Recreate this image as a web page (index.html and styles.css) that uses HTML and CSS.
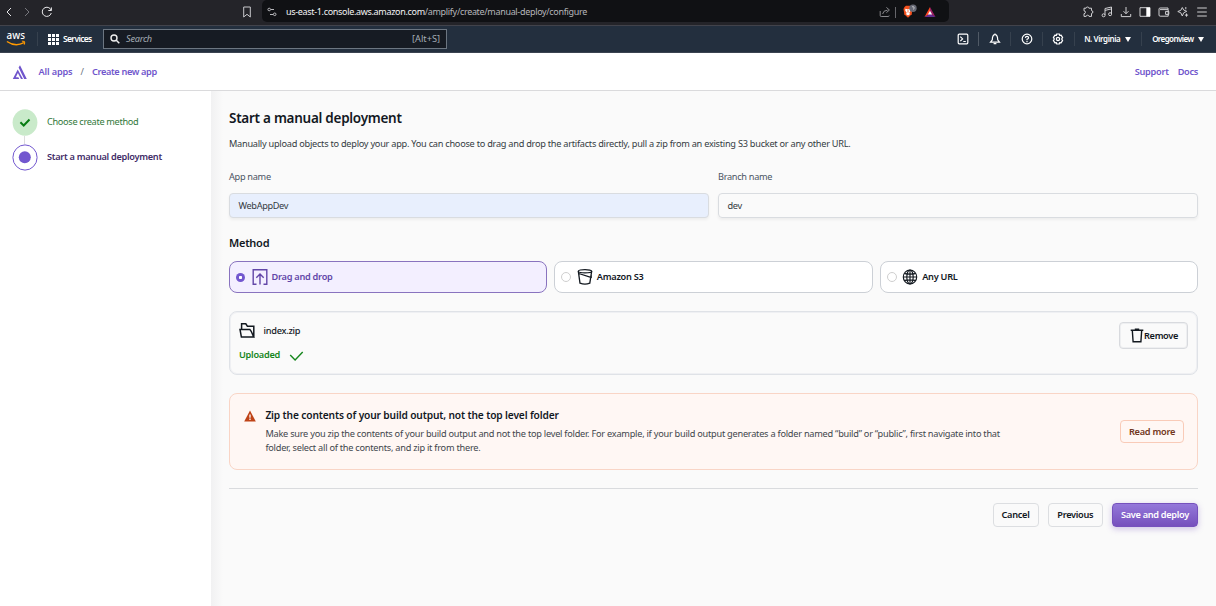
FILE: index.html
```html
<!DOCTYPE html>
<html lang="en">
<head>
<meta charset="utf-8">
<title>AWS Amplify</title>
<link rel="stylesheet" href="styles.css">
</head>
<body>
<header class="browser">
  <div class="nav-icons">
    <svg width="10" height="12" viewBox="0 0 10 12"><path d="M7 2 3 6l4 4" stroke="#e8e8ea"/></svg>
    <svg width="10" height="12" viewBox="0 0 10 12"><path d="m3 2 4 4-4 4" stroke="#77777d"/></svg>
    <svg width="12" height="12" viewBox="0 0 12 12"><path d="M10.2 4.3A4.6 4.6 0 1 0 10.3 7M10.4 1.4v3.1H7.3" stroke="#e8e8ea"/></svg>
  </div>
  <svg class="bookmark" width="10" height="12" viewBox="0 0 10 12"><path d="M1.7 1h6.6v10L5 8.3 1.7 11z" stroke="#c8c8cc"/></svg>
  <div class="address">
    <svg width="10" height="10" viewBox="0 0 10 10"><path d="M4 2.5h3M3 7.5h3" stroke="#b8b8bc"/><circle cx="2.2" cy="2.5" r="1.3" stroke="#b8b8bc"/><circle cx="7.7" cy="7.3" r="1.3" stroke="#b8b8bc"/></svg>
    <span class="url">us-east-1.console.aws.amazon.com<span class="path">/amplify/create/manual-deploy/configure</span></span>
    <svg class="share" width="12" height="12" viewBox="0 0 12 12"><path d="M1.2 5v4.5q0 1 1 1h7q1 0 1-1M3.6 8q.5-3.6 5-3.9M7.4 1.4 10.4 4 7.4 6.7" stroke="#88888c"/></svg>
    <i class="bar"></i>
    <svg width="16" height="16" viewBox="0 0 16 16"><path d="m3.5 3 1.4-1.2h4.2L10.5 3l1 2-.8 5.2L7 13.8l-3.7-3.6L2.5 5z" fill="#f4511e"/><path d="m4.3 4.7 2.2.5 2.6-.5.5 2L8.2 9l1 1L7 11.6 4.8 10l1-1-1.5-2.3z" fill="#fff"/><path d="M7 5.6v3" stroke="#f4511e" stroke-width=".8"/><circle cx="12" cy="4.2" r="3.7" fill="#666975"/><path d="M11 3q1-1 2 .2t-1 2.2" stroke="#ddd" stroke-width=".8"/></svg>
    <svg class="bat" width="12" height="12" viewBox="0 0 12 12"><path d="M6 1 .5 11 6 8z" fill="#ff4724"/><path d="m6 1 5.5 10L6 8z" fill="#9e1f63"/><path d="M.5 11h11L6 7.6z" fill="#662d91"/><path d="M6 4.8 3.9 8.5h4.2z" fill="#fff"/></svg>
  </div>
  <div class="tools">
    <svg width="12" height="12" viewBox="0 0 12 12"><path d="M2 2.2h2.1a1.4 1.2 0 0 1 2.8 0h2.6v2.4a1.4 1.4 0 0 1 0 2.8v3H7a1.4 1.2 0 0 0-2.8 0H2V7.7a1.4 1.4 0 0 0 0-2.9z"/></svg>
    <svg width="12" height="12" viewBox="0 0 12 12"><path d="M4 9V2.5L10.5 1v7M4 4.4l6.5-1.5"/><circle cx="2.6" cy="9.3" r="1.5"/><circle cx="9.1" cy="8.2" r="1.5"/></svg>
    <svg width="12" height="12" viewBox="0 0 12 12"><path d="M6 1v6.7M3.5 5.2 6 7.7l2.5-2.5M1.3 8v2.6h9.4V8"/></svg>
    <svg width="12" height="12" viewBox="0 0 12 12"><path d="M1 1.7h10v8.6H1z"/><path d="M7.3 1.5H11v9H7.3z" fill="#fff" stroke="none"/></svg>
    <svg width="12" height="12" viewBox="0 0 12 12"><path d="M10 3.5V2H2.2q-1.2 0-1.2 1v6q0 1.2 1.2 1.2h8V3.6H2M10.8 5.4H7.6v3h3.2z"/></svg>
    <svg width="12" height="12" viewBox="0 0 12 12"><path d="M5.3 1.5 6.7 4l3 1.3-3 1.5L5.3 10 3.8 6.8.8 5.5l3-1.2zM9.5 7.5v3.2M7.9 9.1h3.2M8.8 1v2.3"/></svg>
    <svg width="12" height="12" viewBox="0 0 12 12"><path d="M1.2 2h9.6M1.2 6h9.6M1.2 10h9.6"/></svg>
  </div>
</header>

<nav class="aws">
  <svg class="logo" width="21" height="18" viewBox="0 0 21 18"><text x="0.6" y="8.8" textLength="18.4" lengthAdjust="spacingAndGlyphs">aws</text><path d="M.9 11.5q8.5 5.8 17 1.2" stroke="#ff9900" stroke-width="1.5"/><path d="M15.9 11.3q4-.7 2.3 3.3" stroke="#ff9900" stroke-width="1.1"/></svg>
  <i class="rule"></i>
  <svg class="grid" width="11" height="11" viewBox="0 0 11 11"><path d="M0 0h3v3H0zM4 0h3v3H4zM8 0h3v3H8zM0 4h3v3H0zM4 4h3v3H4zM8 4h3v3H8zM0 8h3v3H0zM4 8h3v3H4zM8 8h3v3H8z" fill="#fff"/></svg>
  <span class="services">Services</span>
  <div class="search">
    <svg width="10" height="10" viewBox="0 0 10 10"><circle cx="4" cy="4" r="3" stroke="#eee" stroke-width="1.4"/><path d="m6.3 6.3 3 3" stroke="#eee" stroke-width="1.5"/></svg>
    <em>Search</em><span class="key">[Alt+S]</span>
  </div>
  <div class="account">
    <svg width="12" height="12" viewBox="0 0 12 12"><rect x="1.2" y="1.2" width="9.6" height="9.6" rx="1"/><path d="m3.3 3.6 2.3 2.3-2.3 2.2M6.3 8.5h2.5"/></svg>
    <i class="rule lit"></i>
    <svg width="12" height="12" viewBox="0 0 12 12"><path d="M3.3 6.8 1.5 9.1h9L8.7 6.8Q8.6 1.7 6 1.7T3.3 6.8zM4.6 10.6h2.8M6 .5v1"/></svg>
    <i class="rule"></i>
    <svg width="12" height="12" viewBox="0 0 12 12"><circle cx="6" cy="6" r="4.8"/><path d="M4.4 4.9Q4.5 3.4 6 3.4t1.6 1.4Q7.6 5.7 6 6.2v1M6 8v1.2"/></svg>
    <i class="rule"></i>
    <svg width="12" height="12" viewBox="0 0 12 12"><path d="m4.7 1-.4 1.4-1.4-.2L1.4 4.6l.9 1.4-.9 1.4 1.5 2.4 1.4-.2.4 1.4h2.6l.4-1.4 1.4.2 1.5-2.4L9.7 6l.9-1.4-1.5-2.4-1.4.2L7.3 1z"/><circle cx="6" cy="6" r="1.6"/></svg>
    <i class="rule"></i>
    <span class="region">N. Virginia</span><i class="caret"></i>
    <i class="rule second"></i>
    <span class="user">Oregonview</span><i class="caret"></i>
  </div>
</nav>

<div class="crumbs">
  <svg width="15" height="15" viewBox="0 0 15 15"><path d="M5.7 4.4.8 14h6.4l-.8-1.7H3.8l2.1-4.4L9 14h2zM6.6 2.6 8 .2 14.8 14h-2.6z" fill="#7056cc"/></svg>
  <a class="all">All apps</a><span class="slash">/</span><a class="new">Create new app</a>
  <a class="support">Support</a><a class="docs">Docs</a>
</div>

<div class="layout">
  <aside>
    <div class="step done">
      <svg width="26" height="27" viewBox="0 0 26 27"><ellipse cx="13" cy="13.5" rx="12.4" ry="13.2" fill="#c9eaca"/><path d="m8.4 13.3 3.3 3.2 5.8-6" stroke="#087d13" stroke-width="2"/></svg>
      <span>Choose create method</span>
    </div>
    <i class="link"></i>
    <div class="step now">
      <svg width="26" height="27" viewBox="0 0 26 27"><ellipse cx="13" cy="13.5" rx="12.1" ry="12.6" fill="#fff" stroke="#7257cf"/><circle cx="12.8" cy="13.3" r="6" fill="#7257cf"/></svg>
      <span>Start a manual deployment</span>
    </div>
  </aside>
  <main>
    <h1>Start a manual deployment</h1>
    <p class="intro">Manually upload objects to deploy your app. You can choose to drag and drop the artifacts directly, pull a zip from an existing S3 bucket or any other URL.</p>
    <div class="fields">
      <label><span class="fname">App name</span><span class="input filled">WebAppDev</span></label>
      <label><span class="fname">Branch name</span><span class="input">dev</span></label>
    </div>
    <h2>Method</h2>
    <div class="methods">
      <div class="method active">
        <i class="radio"></i>
        <svg width="16" height="18" viewBox="0 0 16 18"><path d="M4.5 16.2H1.2V1.7h13.6v14.5h-3.3M8 16.5V6M4.3 9.7 8 6.1l3.7 3.6" stroke="#6246a8" stroke-width="1.4"/></svg>
        <span>Drag and drop</span>
      </div>
      <div class="method">
        <i class="radio"></i>
        <svg width="16" height="18" viewBox="0 0 16 18"><ellipse cx="8" cy="3.2" rx="6.7" ry="1.6"/><path d="M1.3 3.2 3 15.2q5 1.9 9.8 0L14.7 3.2M1.8 5.5 13.9 9.3M14.2 7v3"/></svg>
        <span>Amazon S3</span>
      </div>
      <div class="method">
        <i class="radio"></i>
        <svg class="globe" width="16" height="18" viewBox="0 0 16 18"><ellipse cx="8" cy="9" rx="6.7" ry="7"/><ellipse cx="8" cy="9" rx="3.2" ry="7"/><path d="M8 2v14M1.3 9h13.4M2.8 5.6q5.2 1 10.4 0M2.8 12.4q5.2-1 10.4 0"/></svg>
        <span>Any URL</span>
      </div>
    </div>
    <section class="file">
      <div>
        <div class="filename"><svg width="17" height="17" viewBox="0 0 17 17"><path d="M2.6 7.5V1.8h4.2l1.6 2.4h6.4v11M1 7.4h9.8l1.4 1.9 2.6 5.8H2.4z" stroke="#12181f" stroke-width="1.5"/></svg><span>index.zip</span></div>
        <div class="status"><span>Uploaded</span><svg width="15" height="12" viewBox="0 0 15 12"><path d="m1.2 6 4.9 5L13.7 3" stroke="#15861c" stroke-width="1.4"/></svg></div>
      </div>
      <button class="remove"><svg width="14" height="15" viewBox="0 0 14 15"><path d="M.7 2.3h12.6M4.8 1.3h4.4M2.3 2.3l.8 11.5h7.8l.8-11.5" stroke="#12181f" stroke-width="1.4"/></svg><span>Remove</span></button>
    </section>
    <section class="warning">
      <svg width="12" height="12" viewBox="0 0 12 12"><path d="M6 .5.2 11.5h11.6z" fill="#bf4317"/><path d="M6 4.5v3.2M6 8.6V10" stroke="#fff" stroke-width="1.3"/></svg>
      <div class="message">
        <h3>Zip the contents of your build output, not the top level folder</h3>
        <p>Make sure you zip the contents of your build output and not the top level folder. For example, if your build output generates a folder named “build” or “public”, first navigate into that<br>folder, select all of the contents, and zip it from there.</p>
      </div>
      <button class="more">Read more</button>
    </section>
    <footer>
      <button class="cancel">Cancel</button>
      <button class="prev">Previous</button>
      <button class="save">Save and deploy</button>
    </footer>
  </main>
</div>
</body>
</html>
```
FILE: styles.css
```css
* { box-sizing: border-box; }
body {
  margin: 0; width: 1216px; height: 606px; overflow: hidden;
  display: flex; flex-direction: column;
  background: #fafafa; color: #12181f;
  font: 9.2px/14px "Noto Sans", "Open Sans", sans-serif;
  letter-spacing: -.255px;
  white-space: nowrap;
}
svg { fill: none; flex: none; display: block; }
i { display: block; flex: none; }
button { font: inherit; font-weight: 600; letter-spacing: inherit; color: inherit; padding: 0; }
h1, h2, h3, p { margin: 0; }

.browser { height: 26px; flex: none; display: flex; align-items: flex-start; background: #242429; border-bottom: 1px solid #42434b; }
.nav-icons { display: flex; gap: 8px; padding: 6px 0 0 4px; width: 242px; }
.nav-icons svg:last-child { margin-left: 1px; }
.bookmark { margin-top: 6px; }
.address { display: flex; align-items: center; margin-left: 10px; width: 687px; height: 22px; padding-left: 5px; background: #101114; border-radius: 5px; }
.url { margin-left: 9px; width: 593px; color: #f4f4f4; font-size: 9px; letter-spacing: -.32px; padding-top: 2px; }
.path { color: #b6b6ba; }
.bar { width: 1px; height: 11px; background: #66666b; margin: 2px 5px 0 4px; }
.address svg { margin-top: 1px; }
.address .bat { margin-left: 7px; }
.tools { display: flex; gap: 7px; padding: 6px 0 0 133px; }
.tools svg { stroke: #cfcfd2; stroke-width: 1; }

.aws { height: 27px; flex: none; display: flex; align-items: center; background: #232f3e; border-bottom: 1px solid #3a4350; color: #fff; font-weight: 600; }
.logo { margin: 0 0 0 6px; overflow: visible; }
.logo text { font: 500 11px "Noto Sans", sans-serif; letter-spacing: 0; fill: #fff; }
.rule { width: 1px; height: 14px; background: #36414e; }
.lit { background: #505a66; }
.logo + .rule { margin-left: 10px; }
.grid { margin-left: 10px; }
.services { margin-left: 4px; width: 40px; font-size: 8.5px; letter-spacing: -.65px; }
.search { display: flex; align-items: center; width: 344px; height: 20px; border: 1px solid #6c7681; background: #161b23; padding: 0 6px; color: #a4acb5; font-weight: 400; }
.search em { margin-left: 6px; flex: 1; }
.key { font-size: 9.2px; letter-spacing: 0; }
.account { display: flex; align-items: center; margin-left: 510px; flex: 1; }
.account svg { stroke: #fff; stroke-width: 1.2; }
.account .rule { margin: 0 9.4px; }
.account .second { margin: 0 10px; }
.region { font-size: 8px; width: 38px; letter-spacing: -.4px; }
.user { font-size: 8px; width: 43px; letter-spacing: -.58px; }
.caret { border: solid transparent; border-width: 5px 3px 0; border-top-color: #fff; margin-left: 3px; }

.crumbs { height: 38px; flex: none; display: flex; align-items: center; background: #fff; border-bottom: 1px solid #dadadc; padding: 1px 18px 0 12px; color: #7056cc; font-weight: 600; }
.all { margin-left: 11.5px; width: 34px; letter-spacing: -.15px; }
.slash { color: #68717c; margin: 0 8.5px 0 8px; width: 3px; font-weight: 400; }
.new { flex: 1; letter-spacing: -.36px; }
.docs { margin-left: 9px; letter-spacing: -.3px; }

.layout { flex: 1; display: flex; min-height: 0; }
aside { width: 211px; background: #fff; padding: 18px 0 0 12px; }
.step { display: flex; height: 27px; color: #31783b; }
.step span { margin: 6px 0 0 9px; letter-spacing: -.32px; }
.step.now span { letter-spacing: -.29px; }
.now { color: #3f2c67; font-weight: 600; }
.link { width: 1px; height: 8px; background: #ddd; margin-left: 12px; }
main { flex: 1; padding: 0 18px; background: linear-gradient(90deg, #f1f1f2, #fafafa 12px); }
h1 { font-size: 13.5px; line-height: 20px; font-weight: 600; letter-spacing: -.27px; margin-top: 17px; }
.intro { margin-top: 9px; color: #343a42; }
.fields { display: grid; grid-template-columns: 1fr 1fr; gap: 9px; margin-top: 19px; }
.fname { display: block; color: #4a5563; letter-spacing: -.3px; }
.input { display: block; height: 25px; margin-top: 9px; padding: 5px 8.5px; border: 1px solid #d9dce0; border-radius: 4px; box-shadow: 0 2px 3px #0000000d; color: #343a42; letter-spacing: -.35px; }
.filled { background: #e8effd; }
h2 { font-size: 11px; line-height: 16px; font-weight: 600; margin-top: 17px; }
.methods { display: grid; grid-template-columns: repeat(3, 1fr); gap: 7px; margin-top: 10px; }
.method { display: flex; align-items: center; height: 32px; border: 1px solid #ccd0d6; border-radius: 8px; background: #fff; padding-left: 6px; font-weight: 600; }
.method svg { stroke: #12181f; stroke-width: 1.3; margin: 0 4px 0 5.5px; }
.method .globe { stroke-width: 1.15; }
.radio { width: 10px; height: 10px; border: 1px solid #cfcfcf; border-radius: 50%; background: #fff; }
.active { background: #f3efff; border-color: #8973bf; color: #6246a8; }
.active .radio { background: radial-gradient(circle, #fff 1.3px, #7257cf 2px); border: 0; height: 9px; width: 9px; margin-right: 1px; }
.file { display: flex; justify-content: space-between; height: 64px; margin-top: 18px; border: 1px solid #dfe2e7; box-shadow: inset 0 0 0 1px #eff0f3; border-radius: 8px; padding: 10px 9px 0; }
.filename { display: flex; align-items: center; gap: 7.5px; height: 17px; font-weight: 500; }
.status { display: flex; align-items: center; gap: 9px; color: #15861c; font-weight: 600; margin-top: 9px; }
.remove { display: flex; align-items: center; justify-content: center; width: 69px; height: 27px; padding-left: 1px; border: 1px solid #d8dade; box-shadow: inset 0 0 0 1px #eeeff1; border-radius: 4px; background: #fafafa; letter-spacing: -.35px; }
.warning { display: flex; height: 77px; margin-top: 18px; border: 1px solid #f9d5c6; border-radius: 8px; background: #fff7f4; padding: 14px 13px 0 14px; }
.warning > svg { margin-top: 2px; }
.message { flex: 1; margin-left: 9.4px; color: #41464c; letter-spacing: -.243px; }
.warning h3 { font-size: 10.2px; line-height: 14px; font-weight: 600; letter-spacing: -.14px; color: #12181f; margin-bottom: 5px; }
.more { width: 64px; height: 23px; margin-top: 12px; border: 1px solid #f9cbb8; border-radius: 4px; background: #fff7f4; color: #713620; }
footer { display: flex; justify-content: flex-end; gap: 9px; margin-top: 18px; border-top: 1px solid #d9dbde; padding-top: 14px; }
footer button { height: 24px; border: 1px solid #dcdee1; border-radius: 4px; background: #fafafa; letter-spacing: -.3px; }
.cancel { width: 46px; }
.prev { width: 55.5px; }
footer .save { width: 86px; border-color: #7651bd; background: linear-gradient(#9478da, #7650bd); color: #fff; box-shadow: 0 2px 6px #7650bd55; }
```
